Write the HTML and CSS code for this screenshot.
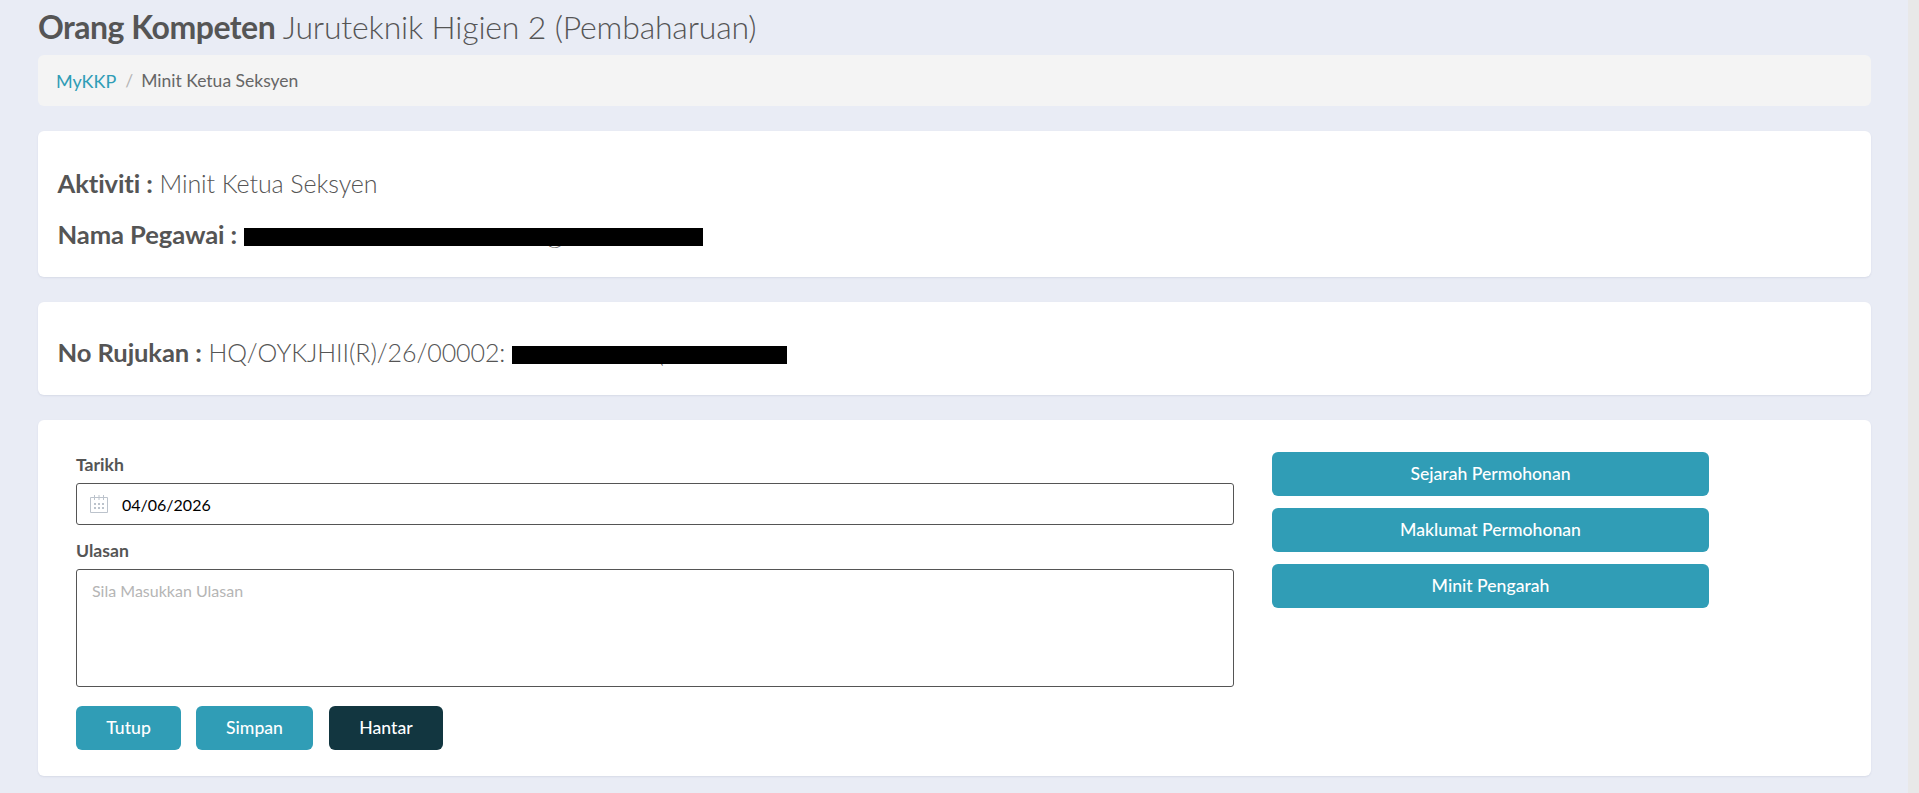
FILE: index.html
```html
<!DOCTYPE html>
<html lang="ms">
<head>
<meta charset="utf-8">
<title>Orang Kompeten</title>
<link rel="stylesheet" href="styles.css">
</head>
<body>
<div class="shell">
  <main class="page">
    <h1 class="title"><strong>Orang Kompeten</strong> Juruteknik Higien 2 (Pembaharuan)</h1>
    <nav class="crumbs"><a href="#">MyKKP</a><span class="sep">/</span><span class="here">Minit Ketua Seksyen</span></nav>

    <section class="card card-info">
      <p class="line"><b>Aktiviti :</b> Minit Ketua Seksyen</p>
      <p class="line"><b>Nama Pegawai :</b> <span class="redact redact-name"><i class="peek peek-at">@</i></span></p>
    </section>

    <section class="card card-ref">
      <p class="line"><b>No Rujukan :</b> HQ/OYKJHII(R)/26/00002: <span class="redact redact-ref"><i class="peek peek-paren">(</i></span></p>
    </section>

    <section class="card card-form">
      <form class="form-col">
        <label class="lbl" for="tarikh">Tarikh</label>
        <div class="input date">
          <svg class="cal" viewBox="0 0 18 18" width="18" height="18" aria-hidden="true">
            <path class="cal-line" d="M.5 2.5h17v15H.5zM4.5 0v5M9 0v5M13.5 0v5"/>
            <path class="cal-dots" d="M4 8h2v2H4zM8 8h2v2H8zM12 8h2v2h-2zM4 12h2v2H4zM8 12h2v2H8zM12 12h2v2h-2z"/>
          </svg>
          <span id="tarikh">04/06/2026</span>
        </div>
        <label class="lbl lbl-2" for="ulasan">Ulasan</label>
        <textarea class="input area" id="ulasan" placeholder="Sila Masukkan Ulasan"></textarea>
        <div class="actions">
          <button type="button" class="btn btn-tutup">Tutup</button>
          <button type="button" class="btn btn-simpan">Simpan</button>
          <button type="button" class="btn btn-dark">Hantar</button>
        </div>
      </form>
      <div class="side-col">
        <button type="button" class="btn">Sejarah Permohonan</button>
        <button type="button" class="btn">Maklumat Permohonan</button>
        <button type="button" class="btn">Minit Pengarah</button>
      </div>
    </section>
  </main>
  <div class="scrollbar"></div>
</div>
</body>
</html>
```
FILE: styles.css
```css
* { box-sizing: border-box; }
html, body { margin: 0; height: 100%; overflow: hidden; }
body { background: #e9ecf5; color: #555; font-family: Lato, "Liberation Sans", sans-serif; }
.shell { display: flex; height: 793px; }
.page { flex: 1; min-width: 0; padding: 0 37px 0 38px; }
.scrollbar { width: 11px; background: #e8e8e8; }

.title { margin: 0; height: 55px; padding-top: 7px; font-size: 32px; line-height: 40px; font-weight: 300; letter-spacing: -.18px; color: #555; white-space: nowrap; }
.title strong { font-weight: 700; letter-spacing: -.5px; }

.crumbs { height: 51px; background: #f4f4f4; border-radius: 6px; padding: 0 18px; display: flex; align-items: center; font-size: 17.6px; }
.crumbs a { color: #2f9db6; font-size: 18px; text-decoration: none; }
.crumbs .sep { color: #b5b5b5; margin: 0 8px 0 9px; }
.crumbs .here { color: #666; font-size: 17.5px; }

.card { background: #fff; border-radius: 6px; box-shadow: 0 1px 2px rgba(60, 70, 120, .1); isolation: isolate; }
.card-info { height: 146px; margin-top: 25px; padding: 35px 20px 0 19.5px; }
.card-ref { height: 93px; margin-top: 25px; padding: 33px 20px 0 19.5px; }
.card-form { height: 356px; margin-top: 25px; padding: 32px 0 0 38px; display: flex; gap: 38px; align-items: flex-start; }

.line { margin: 0 0 16px; font-size: 25px; line-height: 35px; font-weight: 300; letter-spacing: -.08px; color: #555; white-space: nowrap; }
.line b { font-size: 25.6px; font-weight: 700; letter-spacing: -.1px; }
.redact { display: inline-block; position: relative; height: 18px; background: #000; vertical-align: -2px; }
.redact-name { width: 459px; }
.redact-ref { width: 275px; }
.peek { position: absolute; top: 0; font-style: normal; font-size: 22px; line-height: 18px; color: #555; z-index: -1; }
.peek-at { left: 301px; }
.peek-paren { left: 146px; }

.form-col { width: 1158px; display: flex; flex-direction: column; }
.lbl { font-size: 17.6px; line-height: 24px; font-weight: 700; color: #555; height: 31px; padding-top: 1px; }
.lbl-2 { margin-top: 13px; }
.input { width: 100%; border: 1px solid #555; border-radius: 3px; background: #fff; }
.date { height: 42px; display: flex; align-items: center; padding-left: 13px; gap: 14px; font-size: 16px; color: #000; }
.cal { flex: none; }
.cal-line { fill: none; stroke: #bcc3cc; stroke-width: 1; }
.cal-dots { fill: #bcc3cc; }
.area { display: block; height: 118px; padding: 11px 15px; font: 16px/20px Lato, "Liberation Sans", sans-serif; resize: none; }
.area::placeholder { color: #b5b5b5; opacity: 1; }

.actions { display: flex; margin-top: 19px; }
.btn { height: 44px; border: 0; border-radius: 6px; padding: 0 0 1px; background: #309db6; color: #fff; font: 500 17.6px Lato, "Liberation Sans", sans-serif; }
.btn-tutup { width: 105px; margin-right: 15px; }
.btn-simpan { width: 117px; margin-right: 16px; }
.btn-dark { width: 114px; background: #123640; }

.side-col { width: 437px; display: flex; flex-direction: column; gap: 12px; }
```
